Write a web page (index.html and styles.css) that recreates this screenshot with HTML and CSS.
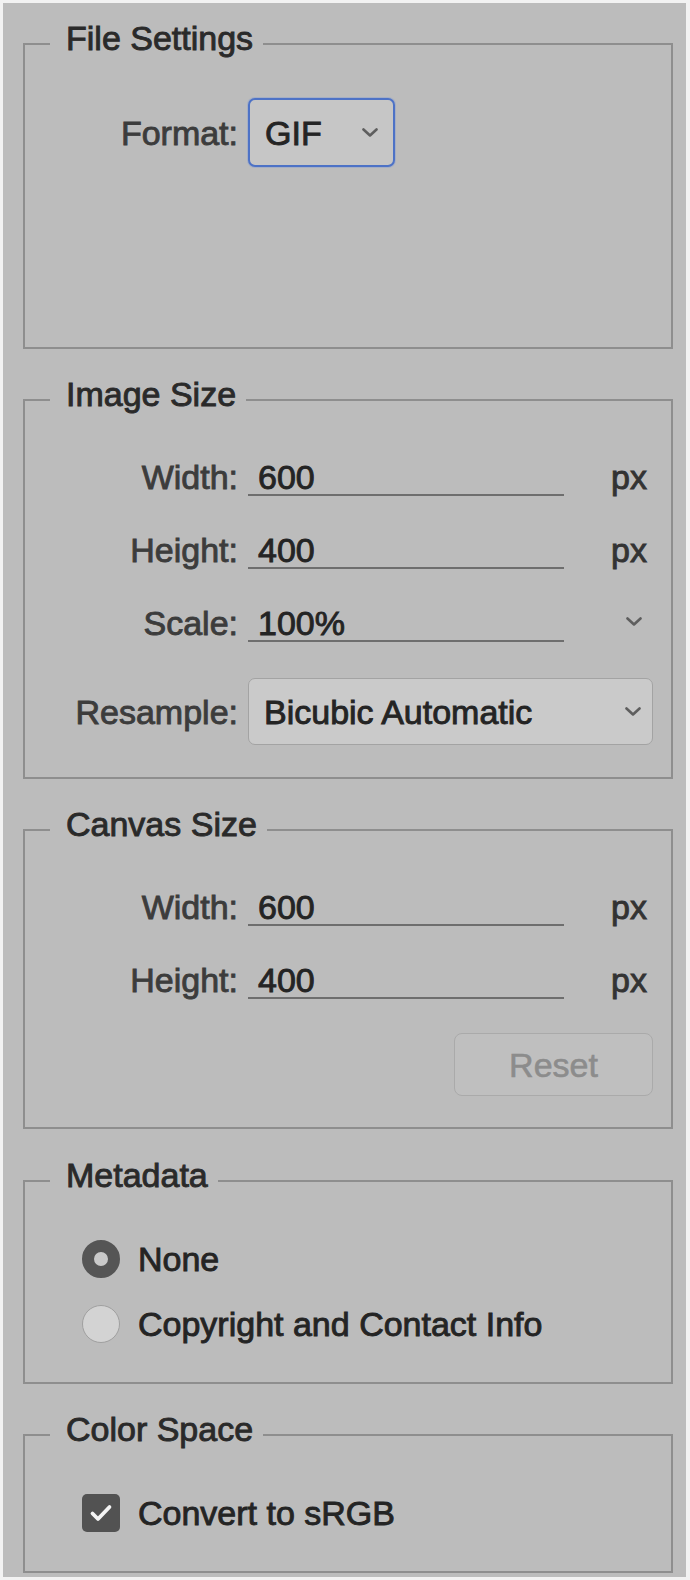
FILE: index.html
```html
<!DOCTYPE html>
<html lang="en">
<head>
<meta charset="utf-8">
<title>Export Settings</title>
<link rel="stylesheet" href="styles.css">
</head>
<body>
<div class="panel">

  <section class="group group-file">
    <div class="legend">File Settings</div>
    <div class="format-row">
      <span class="label">Format:</span>
      <div class="select select-format">
        <span class="value">GIF</span>
        <svg class="chev" viewBox="0 0 16 9" width="16" height="9"><path d="M1.5 1.5 L8 7.5 L14.5 1.5"/></svg>
      </div>
    </div>
  </section>

  <section class="group group-image">
    <div class="legend">Image Size</div>
    <div class="grid">
      <span class="label">Width:</span>
      <span class="field">600</span>
      <span class="unit">px</span>

      <span class="label">Height:</span>
      <span class="field">400</span>
      <span class="unit">px</span>

      <span class="label">Scale:</span>
      <span class="field">100%</span>
      <svg class="chev chev-scale" viewBox="0 0 16 9" width="16" height="9"><path d="M1.5 1.5 L8 7.5 L14.5 1.5"/></svg>

      <span class="label label-select">Resample:</span>
      <div class="select select-resample">
        <span class="value">Bicubic Automatic</span>
        <svg class="chev" viewBox="0 0 16 9" width="16" height="9"><path d="M1.5 1.5 L8 7.5 L14.5 1.5"/></svg>
      </div>
    </div>
  </section>

  <section class="group group-canvas">
    <div class="legend">Canvas Size</div>
    <div class="grid">
      <span class="label">Width:</span>
      <span class="field">600</span>
      <span class="unit">px</span>

      <span class="label">Height:</span>
      <span class="field">400</span>
      <span class="unit">px</span>

      <div class="reset">Reset</div>
    </div>
  </section>

  <section class="group group-meta">
    <div class="legend">Metadata</div>
    <div class="options">
      <div class="option">
        <span class="radio checked"></span>
        <span class="opt-text">None</span>
      </div>
      <div class="option">
        <span class="radio"></span>
        <span class="opt-text">Copyright and Contact Info</span>
      </div>
    </div>
  </section>

  <section class="group group-color">
    <div class="legend">Color Space</div>
    <div class="option option-check">
      <span class="checkbox"><svg viewBox="0 0 38 38" width="38" height="38"><path d="M10.5 19.5 L16 25 L27.5 13"/></svg></span>
      <span class="opt-text">Convert to sRGB</span>
    </div>
  </section>

</div>
</body>
</html>
```

FILE: styles.css
```css
* { box-sizing: border-box; }

html, body {
  margin: 0;
  padding: 0;
  background: #f2f2f2;
}

body {
  font-family: "Liberation Sans", Arial, sans-serif;
  font-size: 34px;
  line-height: 34px;
  color: #333;
}

.panel {
  margin: 3px 0 0 3px;
  width: 683px;
  height: 1574px;
  background: #bcbcbc;
  padding: 40px 13px 0 20px;
  display: flex;
  flex-direction: column;
  gap: 50px;
}

.group {
  flex: none;
  border: 2px solid #8e8e8e;
  display: flex;
  flex-direction: column;
}

.legend {
  align-self: flex-start;
  margin: -24px 0 0 25px;
  padding: 0 10px 0 16px;
  background: #bcbcbc;
  color: #2a2a2a;
  -webkit-text-stroke: 0.9px #2a2a2a;
  white-space: nowrap;
}

.label {
  color: #3c3c3c;
  -webkit-text-stroke: 0.9px #3c3c3c;
  text-align: right;
  white-space: nowrap;
}

.value, .field, .opt-text {
  color: #242424;
  -webkit-text-stroke: 0.9px #242424;
  white-space: nowrap;
}

.chev {
  display: block;
  flex: none;
}
.chev path {
  fill: none;
  stroke: #5e5e5e;
  stroke-width: 2.6;
  stroke-linecap: round;
  stroke-linejoin: round;
}

/* File settings */
.group-file { padding-bottom: 180px; }

.format-row {
  margin-top: 43px;
  display: flex;
  align-items: center;
  gap: 10px;
}
.format-row .label { width: 213px; }

.select {
  display: flex;
  align-items: center;
  justify-content: space-between;
  border-radius: 7px;
}

.select-format {
  width: 147px;
  height: 69px;
  border: 2px solid #4d72c6;
  background: #c6c6c6;
  padding: 0 15px 0 15px;
  box-shadow: 0 0 0 1px rgba(120, 150, 215, 0.35);
}

/* Grids */
.grid {
  margin-top: 49px;
  display: grid;
  grid-template-columns: 213px 316px 1fr;
  column-gap: 10px;
  row-gap: 37px;
  align-items: start;
  padding-right: 24px;
}

.field {
  display: block;
  border-bottom: 2px solid #6e6e6e;
  padding-left: 10px;
}

.unit {
  justify-self: end;
  color: #333;
  -webkit-text-stroke: 0.9px #333;
}

.chev-scale {
  justify-self: end;
  margin-top: 11px;
  margin-right: 5px;
}

.label-select {
  align-self: center;
}

.select-resample {
  grid-column: 2 / 4;
  margin-top: -1px;
  margin-right: -6px;
  height: 67px;
  border: 1.5px solid #a3a3a3;
  background: #cacaca;
  padding: 0 11px 0 15px;
}

.group-image { padding-bottom: 32px; }

.reset {
  grid-column: 2 / 4;
  justify-self: end;
  width: 199px;
  height: 63px;
  margin-top: -3px;
  margin-right: -6px;
  border: 1.5px solid #aaaaaa;
  border-radius: 8px;
  background: #bfbfbf;
  display: flex;
  align-items: center;
  justify-content: center;
  color: #8c8c8c;
  -webkit-text-stroke: 0.6px #8c8c8c;
}

.group-canvas { padding-bottom: 31px; }

/* Metadata */
.group-meta {
  margin-top: 1px;
  padding-bottom: 39px;
}

.options {
  margin-top: 48px;
  display: flex;
  flex-direction: column;
  gap: 27px;
}

.option {
  display: flex;
  align-items: center;
  margin-left: 57px;
  gap: 18px;
}

.radio {
  flex: none;
  width: 38px;
  height: 38px;
  border-radius: 50%;
  border: 1.5px solid #a0a0a0;
  background: #d3d3d3;
}
.radio.checked {
  border: 12px solid #555;
  background: #c9c9c9;
}

/* Color space */
.group-color { padding-bottom: 39px; }

.option-check { margin-top: 48px; }

.checkbox {
  flex: none;
  width: 38px;
  height: 38px;
  border-radius: 5px;
  background: #525252;
  display: block;
}
.checkbox svg { display: block; }
.checkbox path {
  fill: none;
  stroke: #f4f4f4;
  stroke-width: 3.8;
  stroke-linecap: round;
  stroke-linejoin: round;
}
```
